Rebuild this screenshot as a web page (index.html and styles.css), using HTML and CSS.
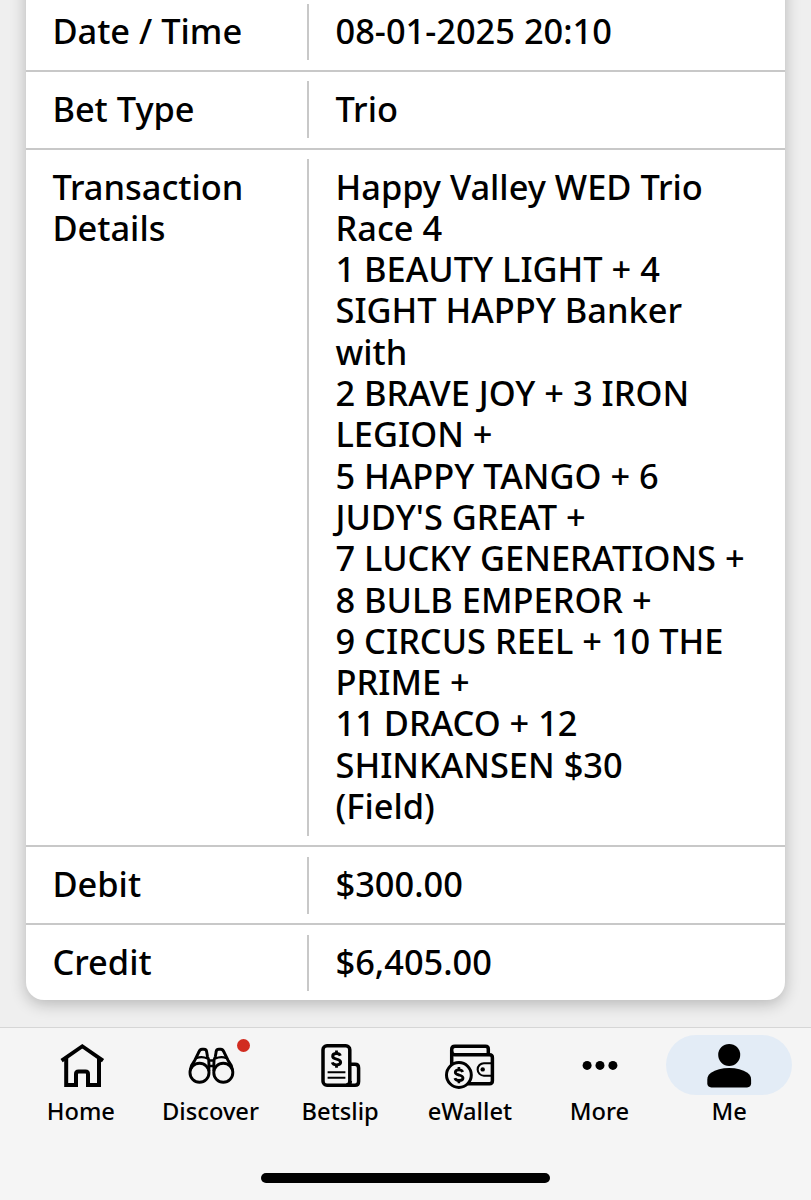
FILE: index.html
```html
<!DOCTYPE html>
<html lang="en">
<head>
    <meta charset="UTF-8">
    <meta name="viewport" content="width=device-width, initial-scale=1.0">
    <title>Transaction Record</title>
    <link rel="stylesheet" href="styles.css">
</head>
<body>
    <main class="content">
        <div class="card">
            <div class="row">
                <div class="label">Date / Time</div>
                <div class="value">08-01-2025 20:10</div>
            </div>
            <div class="row">
                <div class="label">Bet Type</div>
                <div class="value">Trio</div>
            </div>
            <div class="row">
                <div class="label">Transaction<br>Details</div>
                <div class="value">
                    Happy Valley WED Trio<br>
                    Race 4<br>
                    1 BEAUTY LIGHT + 4<br>
                    SIGHT HAPPY Banker<br>
                    with<br>
                    2 BRAVE JOY + 3 IRON<br>
                    LEGION +<br>
                    5 HAPPY TANGO + 6<br>
                    JUDY'S GREAT +<br>
                    7 LUCKY GENERATIONS +<br>
                    8 BULB EMPEROR +<br>
                    9 CIRCUS REEL + 10 THE<br>
                    PRIME +<br>
                    11 DRACO + 12<br>
                    SHINKANSEN $30<br>
                    (Field)
                </div>
            </div>
            <div class="row">
                <div class="label">Debit</div>
                <div class="value">$300.00</div>
            </div>
            <div class="row">
                <div class="label">Credit</div>
                <div class="value">$6,405.00</div>
            </div>
        </div>
    </main>

    <nav class="tab-bar">
        <div class="tabs">
            <a class="tab">
                <span class="icon">
                    <svg viewBox="-1 0 60 60">
                        <path class="line" stroke-width="4" d="M14.2 23V50H24V39q0-2.5 2.5-2.5h7q2.5 0 2.5 2.5V50H47V23"/>
                        <path class="line" stroke-width="3.8" d="M9.6 25.6L30.3 11.3L51 25.6"/>
                    </svg>
                </span>
                <span class="tab-name">Home</span>
            </a>
            <a class="tab">
                <span class="icon">
                    <svg viewBox="-0.5 0 60 60">
                        <g class="line" stroke-width="2.9">
                            <circle cx="18" cy="37.7" r="9.5"/>
                            <circle cx="41.8" cy="37.7" r="9.5"/>
                            <path d="M8.7 35.5Q9.5 30 13.2 25.5L17.4 17Q18.2 14.2 20.6 14.2H22.4Q25 14.2 25.2 17L26 21.8Q27.4 24 27.4 28V36"/>
                            <path d="M51.1 35.5Q50.3 30 46.6 25.5L42.4 17Q41.6 14.2 39.2 14.2H37.4Q34.8 14.2 34.6 17L33.8 21.8Q32.4 24 32.4 28V36"/>
                            <path stroke-width="2.2" d="M14.6 23.2Q20.5 21 26 23.6M45.2 23.2Q39.3 21 33.8 23.6"/>
                            <path stroke-width="2.6" d="M26.5 25.5H33.3M27 31H32.8"/>
                        </g>
                    </svg>
                    <i class="dot"></i>
                </span>
                <span class="tab-name">Discover</span>
            </a>
            <a class="tab">
                <span class="icon">
                    <svg viewBox="0 0 60 60">
                        <g class="line" stroke-width="3.5">
                            <rect x="13" y="10.7" width="26.8" height="39.6" rx="4"/>
                            <path d="M40 29.3H45Q48.6 29.3 48.6 33V46.5Q48.6 50.3 45 50.3H36Q40.3 50.3 40.3 46"/>
                            <path stroke-width="2.1" d="M17.6 37.2H35.4M17.6 42.8H35.4"/>
                            <path stroke-width="3" d="M30.3 20.8Q29.5 18.6 26.6 18.6Q22.7 18.6 22.7 21.3Q22.7 23.3 26.5 24.1Q30.6 25 30.6 27.3Q30.6 29.9 26.6 29.9Q23.1 29.9 22.3 27.4"/>
                            <path stroke-width="2.8" d="M26.5 15.6V18.6M26.5 29.9V32.8"/>
                        </g>
                    </svg>
                </span>
                <span class="tab-name">Betslip</span>
            </a>
            <a class="tab">
                <span class="icon">
                    <svg viewBox="0.5 0 60 60">
                        <g class="line" stroke-width="3.5">
                            <path d="M12.2 31V14.5Q12.2 11.2 15.4 11.2H46Q48.8 11.2 48.8 14V19.8"/>
                            <path d="M12.2 16.5Q12.2 19.8 15.4 19.8H50Q52.9 19.8 52.9 22.7V45.7Q52.9 48.7 50 48.7H28"/>
                            <path stroke-width="2.1" d="M52.9 28.2H44.4A6.2 6.2 0 0 0 44.4 40.7H52.9"/>
                            <circle class="paper" cx="19.4" cy="40" r="12.4" stroke-width="3"/>
                            <path stroke-width="2.8" d="M23.2 37Q22.4 34.8 19.5 34.8Q15.8 34.8 15.8 37.3Q15.8 39.3 19.5 40Q23.5 40.9 23.5 43Q23.5 45.5 19.5 45.5Q16.1 45.5 15.4 43.1"/>
                            <path stroke-width="2.6" d="M19.4 32V34.8M19.4 45.5V48.3"/>
                        </g>
                        <circle cx="43.2" cy="34.4" r="2.2"/>
                    </svg>
                </span>
                <span class="tab-name">eWallet</span>
            </a>
            <a class="tab">
                <span class="icon">
                    <svg viewBox="0.5 0 60 60">
                        <circle cx="17.6" cy="30.4" r="4.5"/>
                        <circle cx="30.5" cy="30.4" r="4.5"/>
                        <circle cx="43.4" cy="30.4" r="4.5"/>
                    </svg>
                </span>
                <span class="tab-name">More</span>
            </a>
            <a class="tab active">
                <span class="icon">
                    <svg viewBox="0 0 60 60">
                        <circle cx="30.2" cy="19.9" r="11"/>
                        <path d="M8.3 44.5Q8.3 40.5 12 37.8Q19 33 30.2 33Q41.4 33 48.4 37.8Q52.1 40.5 52.1 44.5V48.3Q52.1 52.4 48 52.4H12.4Q8.3 52.4 8.3 48.3Z"/>
                    </svg>
                </span>
                <span class="tab-name">Me</span>
            </a>
        </div>
        <div class="home-indicator"></div>
    </nav>
</body>
</html>
```
FILE: styles.css
```css
* {
    box-sizing: border-box;
}

body {
    font-family: "Noto Sans", sans-serif;
    font-weight: 500;
    background-color: #efefef;
    color: #000000;
    margin: 0;
    height: 1200px;
    display: flex;
    flex-direction: column;
    overflow: hidden;
}

.content {
    height: 1027px;
    padding: 0 26px;
    overflow: hidden;
}

/* the card starts above the visible part of the page */
.card {
    margin-top: -46px;
    padding-top: 40px;
    background-color: #ffffff;
    border-radius: 18px;
    box-shadow: 0 4px 16px rgba(0, 0, 0, 0.24);
}

.row {
    display: flex;
    padding: 9.5px 0;
    border-bottom: 2px solid #c8c8c8;
    font-size: 34.4px;
    line-height: 41.3px;
    white-space: nowrap;
}

.row:last-child {
    padding-bottom: 9px;
    border-bottom: none;
}

.label {
    width: 283px;
    padding: 6.3px 0 9.3px 26.4px;
    border-right: 2px solid #c8c8c8;
}

.value {
    padding: 6.3px 0 9.3px 26.5px;
}

.tab-bar {
    height: 173px;
    background-color: #f5f5f5;
    border-top: 1px solid #d6d6d6;
    display: flex;
    flex-direction: column;
    align-items: center;
}

.tabs {
    width: 778px;
    display: flex;
    margin-right: 1px;
    padding-top: 7px;
}

.tab {
    flex: 1;
    display: flex;
    flex-direction: column;
    align-items: center;
}

.icon {
    position: relative;
    width: 126px;
    height: 60px;
    border-radius: 30px;
    display: flex;
    justify-content: center;
}

.icon svg {
    width: 60px;
    height: 60px;
}

.active .icon {
    background-color: #e3ecf6;
}

.line {
    fill: none;
    stroke: #000000;
}

.paper {
    fill: #f5f5f5;
}

.dot {
    position: absolute;
    top: 4px;
    right: 24px;
    width: 13px;
    height: 13px;
    border-radius: 50%;
    background-color: #d12c20;
}

.tab-name {
    font-size: 23.7px;
    line-height: 32px;
}

.home-indicator {
    width: 289px;
    height: 10px;
    margin-top: 46px;
    border-radius: 5px;
    background-color: #000000;
}
```
